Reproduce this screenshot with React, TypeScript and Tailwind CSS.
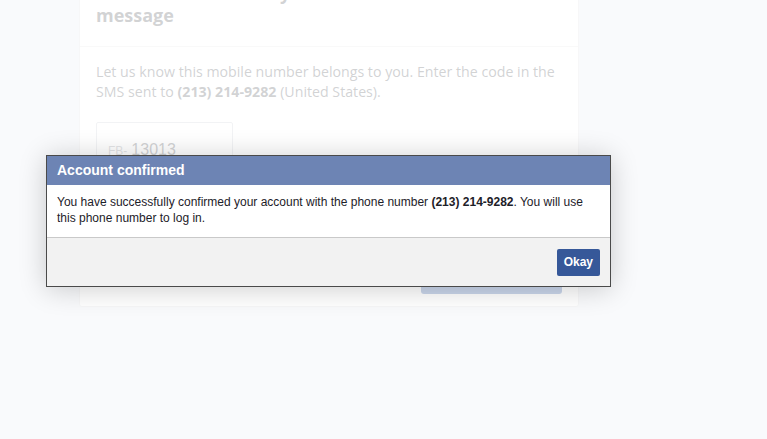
import React from 'react';

export default function App() {
  return (
    <main className="relative h-[439px] overflow-hidden bg-[#e6eaf2] font-['Liberation_Sans',Arial,sans-serif]">
      {/* page behind the dialog */}
      <div className="ml-[79px] mt-[-35px] w-[500px] rounded-[3px] border border-[#dddfe2] bg-white">
        <div className="border-b border-[#e5e5e5] px-4 pt-4 pb-[20px]">
          <h1 className="text-[18px] leading-[22px] font-bold text-[#4b4f56] font-['Open_Sans',sans-serif]">
            Enter the code from your SMS<br />message
          </h1>
        </div>
        <div className="px-4 pt-[15px] pb-[13px]">
          <p className="text-[14.2px] leading-[20px] text-[#4b4f56] font-['Open_Sans',sans-serif]">
            Let us know this mobile number belongs to you. Enter the code in the SMS sent to{' '}
            <span className="font-bold">(213) 214-9282</span> (United States).
          </p>
          <div className="mt-[20px] flex h-[44px] w-[137px] items-end gap-1 rounded-[2px] border border-[#ccd0d5] px-[11px] pb-[5px]">
            <span className="text-[12px] text-[#90949c]">FB-</span>
            <span className="text-[16px] leading-[20px] text-[#4b4f56]">13013</span>
          </div>
          <a className="mt-[16px] block text-[14px] text-[#4267b2]">Send SMS again</a>
        </div>
        <div className="flex justify-end px-[16px] pt-[42px] pb-[12px]">
          <button className="h-[36px] w-[141px] rounded-[3px] bg-[#2f5bb0] text-[14px] font-bold text-white">Continue</button>
        </div>
      </div>

      {/* dim layer */}
      <div className="absolute inset-0 bg-white/75" />

      {/* dialog */}
      <div className="absolute left-[46px] top-[155px] w-[565px] border border-[#4a4a4a] bg-white shadow-[0_2px_26px_rgba(0,0,0,0.2)]">
        <div className="h-[29px] bg-[#6d84b4] px-[10px] text-[14px] leading-[29px] font-bold text-white">
          Account confirmed
        </div>
        <div className="border-b border-[#c9c9c9] px-[10px] pt-[9px] pb-[11px] text-[12px] leading-[16px] text-[#1d2129]">
          You have successfully confirmed your account with the phone number{' '}
          <span className="font-bold">(213) 214-9282</span>. You will use this phone number to log in.
        </div>
        <div className="flex h-[48px] items-center justify-end bg-[#f2f2f2] px-[10px]">
          <button className="h-[27px] rounded-[2px] bg-[#365899] px-[7px] text-[12px] font-bold text-white">Okay</button>
        </div>
      </div>
    </main>
  );
}
